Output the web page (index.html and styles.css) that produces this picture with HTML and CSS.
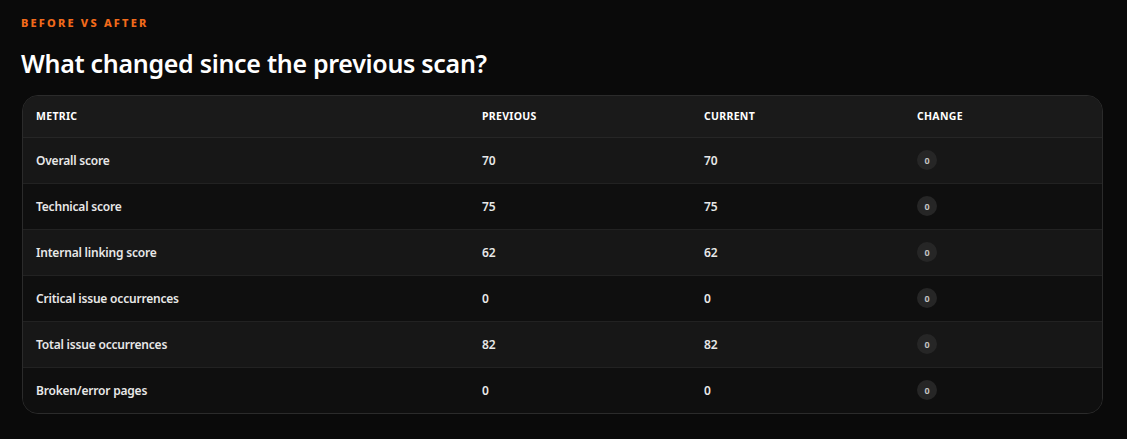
FILE: index.html
```html
<!DOCTYPE html>
<html lang="en">
<head>
    <meta charset="UTF-8">
    <meta name="viewport" content="width=device-width, initial-scale=1.0">
    <title>Before vs After</title>
    <link rel="stylesheet" href="styles.css">
</head>
<body>
    <section class="compare">
        <p class="eyebrow">Before vs After</p>
        <h2>What changed since the previous scan?</h2>

        <div class="table-card">
            <table>
                <thead>
                    <tr>
                        <th class="col-metric">Metric</th>
                        <th class="col-prev">Previous</th>
                        <th class="col-cur">Current</th>
                        <th>Change</th>
                    </tr>
                </thead>
                <tbody>
                    <tr>
                        <td>Overall score</td>
                        <td>70</td>
                        <td>70</td>
                        <td><span class="delta">0</span></td>
                    </tr>
                    <tr>
                        <td>Technical score</td>
                        <td>75</td>
                        <td>75</td>
                        <td><span class="delta">0</span></td>
                    </tr>
                    <tr>
                        <td>Internal linking score</td>
                        <td>62</td>
                        <td>62</td>
                        <td><span class="delta">0</span></td>
                    </tr>
                    <tr>
                        <td>Critical issue occurrences</td>
                        <td>0</td>
                        <td>0</td>
                        <td><span class="delta">0</span></td>
                    </tr>
                    <tr>
                        <td>Total issue occurrences</td>
                        <td>82</td>
                        <td>82</td>
                        <td><span class="delta">0</span></td>
                    </tr>
                    <tr>
                        <td>Broken/error pages</td>
                        <td>0</td>
                        <td>0</td>
                        <td><span class="delta">0</span></td>
                    </tr>
                </tbody>
            </table>
        </div>
    </section>
</body>
</html>
```

FILE: styles.css
```css
* {
    margin: 0;
    padding: 0;
    box-sizing: border-box;
}

body {
    background-color: #0a0a0a;
    color: #f2f2f2;
    font-family: "Noto Sans", "Open Sans", sans-serif;
    padding: 15px 24px 0 22px;
}

.eyebrow {
    color: #f26a1b;
    font-size: 11px;
    font-weight: 800;
    letter-spacing: 2.2px;
    text-transform: uppercase;
    margin-left: -1px;
    line-height: 16px;
}

h2 {
    font-size: 25px;
    font-weight: 600;
    color: #ffffff;
    letter-spacing: -0.3px;
    line-height: 34px;
    margin: 15px 0 15px -1px;
}

.table-card {
    border: 1px solid #2b2b2b;
    border-radius: 16px;
    overflow: hidden;
    background-color: #131313;
}

table {
    width: 100%;
    border-collapse: collapse;
}

th {
    text-align: left;
    font-size: 10.5px;
    font-weight: 700;
    text-transform: uppercase;
    letter-spacing: 0.3px;
    color: #ffffff;
    background-color: #1a1a1a;
    height: 41px;
    padding: 0 13px;
    border-bottom: 1px solid #262626;
}

.col-metric {
    width: 446px;
}

.col-prev {
    width: 222px;
}

.col-cur {
    width: 213px;
}

td {
    font-size: 12px;
    font-weight: 600;
    letter-spacing: -0.2px;
    color: #e8e8e8;
    height: 46px;
    padding: 0 13px;
    border-bottom: 1px solid #222222;
}

tbody tr:nth-child(odd) {
    background-color: #171717;
}

tbody tr:nth-child(even) {
    background-color: #0f0f0f;
}

tbody tr:last-child td {
    border-bottom: none;
}

.delta {
    display: inline-flex;
    align-items: center;
    justify-content: center;
    width: 20px;
    height: 20px;
    border-radius: 50%;
    background-color: #262626;
    color: #c0c0c0;
    font-size: 9px;
    font-weight: 700;
    vertical-align: middle;
}
```
